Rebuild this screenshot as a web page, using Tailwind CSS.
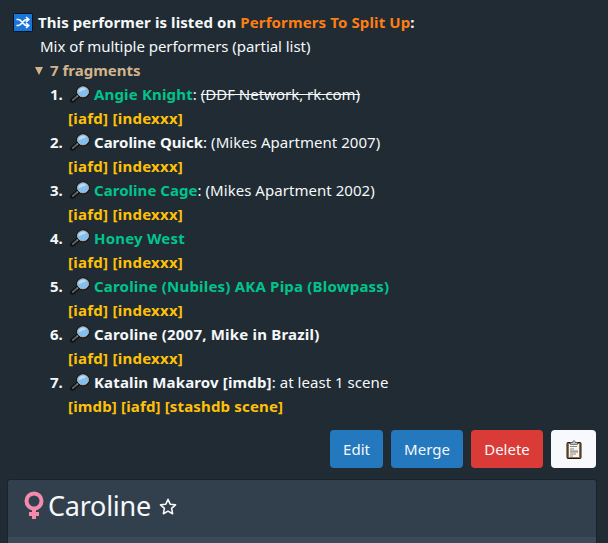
<!DOCTYPE html>
<html lang="en"><head><meta charset="utf-8"><title>Caroline</title>
<script src="https://cdn.jsdelivr.net/npm/@tailwindcss/browser@4"></script></head>
<body class="h-[543px] overflow-hidden bg-[#202b33] font-['Noto_Sans','Open_Sans',sans-serif] text-[15px] leading-6 text-[#f5f8fa]">
<svg class="hidden">
<symbol id="mag" viewBox="0 0 20 18"><path d="M2.400 15.400 8.800 10" stroke="#101010" stroke-width="4.600" stroke-linecap="round"/><path d="M2.800 15 7 11.500" stroke="#5b5f62" stroke-width="2" stroke-linecap="round"/><path d="m7.200 11.300 2-1.800" stroke="#b9b9b9" stroke-width="2"/><ellipse cx="13" cy="6.800" rx="6.300" ry="5.800" fill="#83bff1" stroke="#161616" stroke-width="1.300"/><ellipse cx="13" cy="6.800" rx="5.500" ry="5" fill="#83bff1" stroke="#aaa7a3" stroke-width="1"/><path d="M8.600 7.400a4.500 4 0 0 1 7.800-3.400Z" fill="#b5daf7"/></symbol>
</svg>
<main class="pl-[13px] pr-3 pt-[10px]">
 <div class="flex h-6 font-bold"><svg class="mr-[5px] mt-[3px] h-5 w-5 shrink-0" viewBox="0 0 20 20"><rect x=".5" y=".5" width="19" height="18" rx="1" fill="#1976d8" stroke="#07131e"/><path d="M3.500 6.500h2c3.300 0 4.600 6 8 6h2M3.500 12.500h2c3.300 0 4.600-6 8-6h2M13 4 15.800 6.500 13 9M13 10l2.800 2.500L13 15" fill="none" stroke="#fff" stroke-width="1.600"/></svg><span class="whitespace-pre tracking-[0.09px]">This performer is listed on </span><span class="tracking-[0.12px] text-[#fd7e14]">Performers To Split Up</span><span>:</span></div>
 <div class="h-6 whitespace-pre pl-[27px] tracking-[-0.04px]">Mix of multiple performers (partial list)</div>
 <div class="flex h-6 items-center pl-[22px] font-bold text-[#d2b48c]"><svg class="mr-[7px] mt-0.5 h-2 w-2" viewBox="0 0 8 8"><path d="M0 0h8L4 8Z" fill="currentColor"/></svg><span>7 fragments</span></div>
 <ol class="pl-[37px] font-bold">
  <li><div class="flex h-6 whitespace-pre"><span class="w-5">1.</span><svg class="mr-1 mt-[3px] h-[18px] w-5"><use href="#mag"/></svg><span class="tracking-[0.16px] text-[#00c48c]">Angie Knight</span><span class="font-normal">: </span><span class="font-normal line-through">(DDF Network, rk.com)</span></div><div class="h-6 pl-[18px] tracking-[0.26px] text-[#ffc107]">[iafd] [indexxx]</div></li>
  <li><div class="flex h-6 whitespace-pre"><span class="w-5">2.</span><svg class="mr-1 mt-[3px] h-[18px] w-5"><use href="#mag"/></svg><span>Caroline Quick</span><span class="font-normal tracking-[0.04px]">: (Mikes Apartment 2007)</span></div><div class="h-6 pl-[18px] tracking-[0.26px] text-[#ffc107]">[iafd] [indexxx]</div></li>
  <li><div class="flex h-6 whitespace-pre"><span class="w-5">3.</span><svg class="mr-1 mt-[3px] h-[18px] w-5"><use href="#mag"/></svg><span class="tracking-[0.04px] text-[#00c48c]">Caroline Cage</span><span class="font-normal tracking-[0.04px]">: (Mikes Apartment 2002)</span></div><div class="h-6 pl-[18px] tracking-[0.26px] text-[#ffc107]">[iafd] [indexxx]</div></li>
  <li><div class="flex h-6 whitespace-pre"><span class="w-5">4.</span><svg class="mr-1 mt-[3px] h-[18px] w-5"><use href="#mag"/></svg><span class="tracking-[0.2px] text-[#00c48c]">Honey West</span></div><div class="h-6 pl-[18px] tracking-[0.26px] text-[#ffc107]">[iafd] [indexxx]</div></li>
  <li><div class="flex h-6 whitespace-pre"><span class="w-5">5.</span><svg class="mr-1 mt-[3px] h-[18px] w-5"><use href="#mag"/></svg><span class="tracking-[0.2px] text-[#00c48c]">Caroline (Nubiles) AKA Pipa (Blowpass)</span></div><div class="h-6 pl-[18px] tracking-[0.26px] text-[#ffc107]">[iafd] [indexxx]</div></li>
  <li><div class="flex h-6 whitespace-pre"><span class="w-5">6.</span><svg class="mr-1 mt-[3px] h-[18px] w-5"><use href="#mag"/></svg><span class="tracking-[0.2px]">Caroline (2007, Mike in Brazil)</span></div><div class="h-6 pl-[18px] tracking-[0.26px] text-[#ffc107]">[iafd] [indexxx]</div></li>
  <li><div class="flex h-6 whitespace-pre"><span class="w-5">7.</span><svg class="mr-1 mt-[3px] h-[18px] w-5"><use href="#mag"/></svg><span class="tracking-[0.15px]">Katalin Makarov [imdb]</span><span class="font-normal tracking-[0.04px]">: at least 1 scene</span></div><div class="h-6 pl-[18px] tracking-[0.16px] text-[#ffc107]">[imdb] [iafd] [stashdb scene]</div></li>
 </ol>
 <div class="mt-3 flex h-[38px] justify-end gap-2">
  <button class="w-[53px] rounded bg-[#2378be]">Edit</button>
  <button class="w-[72px] rounded bg-[#2378be]">Merge</button>
  <button class="w-[72px] rounded bg-[#db3b36]">Delete</button>
  <button class="flex w-[45px] items-center justify-center rounded bg-[#f8f9fc]" aria-label="Copy"><svg class="h-[19px] w-4" viewBox="0 0 16 19"><rect x="1" y="2.500" width="14" height="16" rx="1" fill="#9b6d38" stroke="#151515"/><path d="M3 4h10v13H3Z" fill="#f4f4f4"/><path d="M4.500 4.500v-2h2C6.500.2 9.500.2 9.500 2.500h2v2Z" fill="#b9bdc0" stroke="#555" stroke-width=".7"/><path d="M4 6.500h7M4 9h4M4 11h8M4 12h8M4 14h6M4 16h3" stroke="#888" stroke-width="1"/></svg></button>
 </div>
</main>
<section class="ml-[7px] mr-[11px] mt-[11px] h-16 overflow-hidden rounded-t border border-b-0 border-[#19232b] bg-[#394b59]">
 <header class="flex h-[57px] items-center bg-[#32404d] pl-4">
  <svg class="-mt-[7px] h-7 w-5" viewBox="0 0 20 28"><circle cx="10" cy="10" r="7.500" fill="none" stroke="#f58bac" stroke-width="4"/><path d="M10 18v10M5 23h10" stroke="#f58bac" stroke-width="4"/></svg>
  <h1 class="-mt-[5px] ml-1 text-[27px] leading-8 tracking-[-0.25px]">Caroline</h1>
  <svg class="-mt-1 ml-2 h-[17px] w-[18px]" viewBox="0 0 18 17"><path d="m9 1.300 2.200 4.900 5.300.6-3.900 3.600 1 5.300L9 13.100l-4.600 2.600 1-5.300L1.500 6.800l5.300-.6Z" fill="none" stroke="#f5f8fa" stroke-width="1.600" stroke-linejoin="round"/></svg>
 </header>
</section>
</body></html>
